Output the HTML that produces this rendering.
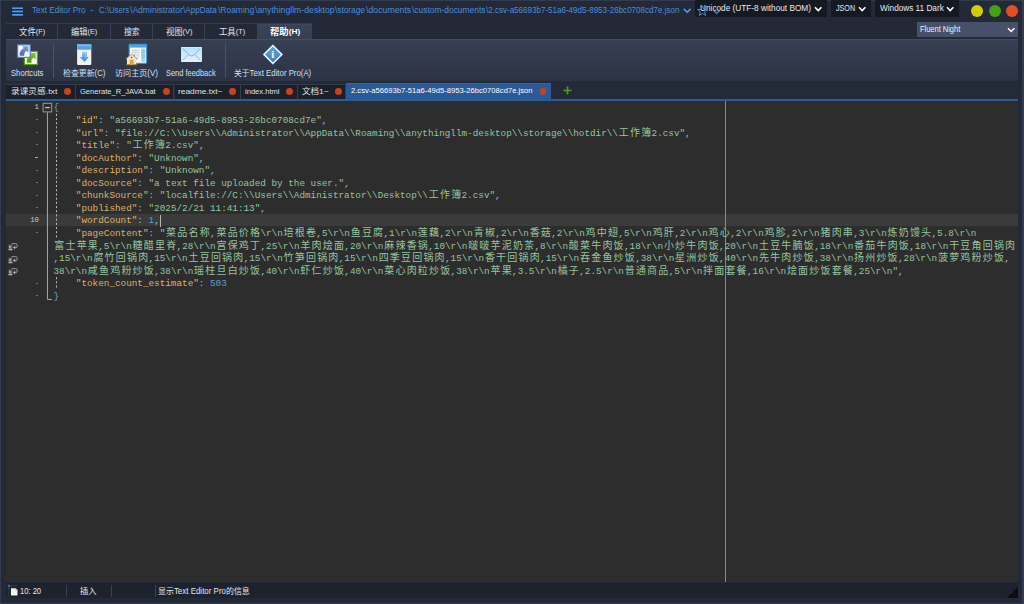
<!DOCTYPE html>
<html lang="zh">
<head>
<meta charset="utf-8">
<title>Text Editor Pro</title>
<style>
*{box-sizing:border-box;margin:0;padding:0}
html,body{width:1024px;height:604px;overflow:hidden}
body{background:#242938;font-family:"Liberation Sans","Noto Sans CJK SC",sans-serif;position:relative;color:#e4e6ea}
.abs{position:absolute}
#frame{position:absolute;left:0;top:0;width:1024px;height:604px;border:1px solid #343b4f;border-right-width:2px;pointer-events:none;z-index:50}
/* title */
.ti{position:absolute;top:3.1px;height:14px;line-height:14px;font-size:8.3px;color:#4b8ddf;white-space:pre;transform-origin:0 50%}
.dd{position:absolute;z-index:60;top:0;height:16.5px;background:#151922;color:#e8eaee;font-size:8.3px;line-height:16px;white-space:pre}
.dd span{position:absolute;top:0}
.circ{position:absolute;width:12px;height:12px;border-radius:50%;top:5px}
/* ribbon tabs */
#rtabs{position:absolute;left:5.7px;top:23.2px;width:306.2px;height:16px;border-top:1px solid #343a4c}
.rt{position:absolute;top:0;height:15px;border-right:1px solid #3a4154}
.rl{position:absolute;top:24.5px;height:15px;font-size:8.6px;line-height:15px;color:#e2e4e8;white-space:pre}
.rt.act{background:linear-gradient(#3a4257,#373f53);border:none;border-top:1px solid #3f475c;top:-0.2px;height:16.2px}
#tool{position:absolute;left:5.7px;top:38.7px;width:1012.5px;height:42.1px;background:linear-gradient(#373f53,#2c3345);border-top:1px solid #444c61}
.tl{position:absolute;top:66.5px;height:12px;line-height:12px;font-size:8.3px;color:#cfe0f7;white-space:pre}
.sep{position:absolute;top:42.5px;width:1px;height:35.5px;background:#4a5267}
/* doc tabs */
#dtbar{position:absolute;left:5.7px;top:80.8px;width:1012.5px;height:18.4px;background:#252a39}
.dt{position:absolute;top:83.8px;height:15.4px;background:#1b202b;border-top:1px solid #343b4d;border-right:1px solid #353c4e;font-size:8.1px;line-height:13.8px;color:#dfe2e8;white-space:pre}
.dt span{position:absolute;top:0}
.dt i{position:absolute;top:3.3px;width:6.8px;height:6.8px;border-radius:50%;background:#c8431a}
.dt.act{background:#2b5a99;top:83.3px;height:16px;border-top:1px solid #34649f;border-right:none;line-height:14.8px;color:#fff}
.dt.act i{top:3.8px}
#bline{position:absolute;left:5.7px;top:99.2px;width:1012.5px;height:1.8px;background:#2d5b98}
/* editor */
#ed{position:absolute;left:5.7px;top:100.9px;width:1012.5px;height:481.5px;background:#2d2d2d;overflow:hidden}
#gut{display:none}
#cur{position:absolute;left:5.7px;top:213.8px;width:1012.5px;height:12.6px;background:linear-gradient(90deg,#383838 41.5px,#3b3b3b 41.5px)}
#caret{position:absolute;left:160px;top:214.6px;width:1.1px;height:12.1px;background:#b6b6b6}
#margin{position:absolute;left:725px;top:101px;width:1px;height:481.5px;background:#8a8a8a}
.ln{position:absolute;left:53.5px;height:12.555px;line-height:12.555px;font-family:"Liberation Mono","Noto Sans CJK SC",monospace;font-size:9.327px;white-space:pre;letter-spacing:0}
.cj{font-family:"Noto Sans CJK SC","Liberation Mono",monospace;font-size:10.00px;line-height:1px;letter-spacing:1.19px;position:relative;left:0.8px}
.gn{position:absolute;left:10px;width:28.9px;text-align:right;height:12.555px;line-height:12.555px;font-family:"Liberation Mono",monospace;font-size:7.4px;letter-spacing:-0.15px;color:#c4cad2}
.gm{position:absolute;height:1px;background:#7a7a7a}
/* status */
#status{position:absolute;left:5.7px;top:582.3px;width:1012.5px;height:15.8px;background:#1d222d;border-top:1.5px solid #232937}
.st{position:absolute;top:585.2px;height:12px;line-height:12px;font-size:8.3px;color:#e4e6ea;white-space:pre}
.ssep{position:absolute;top:585px;width:1px;height:12px;background:#3a4153}
</style>
</head>
<body>
<!-- title bar -->
<svg class="abs" style="left:12px;top:6.5px" width="12" height="10" viewBox="0 0 12 10"><g fill="#4f9cf6"><rect x="0.2" y="0.4" width="10.8" height="1.6"/><rect x="0.2" y="3.6" width="10.8" height="1.7"/><rect x="0.2" y="7" width="10.8" height="1.7"/></g></svg>
<div class="ti" style="left:31.5px;transform-origin:0 50%;transform:scaleX(0.9849)">Text Editor Pro</div>
<div class="ti" style="left:89.6px;transform-origin:0 50%;transform:scaleX(1.1932)">-</div>
<div class="ti" style="left:98.7px;transform-origin:0 50%;transform:scaleX(0.9355)">C:\Users</div>
<div class="ti" style="left:129.7px;transform-origin:0 50%;transform:scaleX(1.0315)">\Administrator</div>
<div class="ti" style="left:183.1px;transform-origin:0 50%;transform:scaleX(0.9742)">\AppData</div>
<div class="ti" style="left:217.5px;transform-origin:0 50%;transform:scaleX(1.0193)">\Roaming</div>
<div class="ti" style="left:254.5px;transform-origin:0 50%;transform:scaleX(1.0472)">\anythingllm-desktop</div>
<div class="ti" style="left:334.8px;transform-origin:0 50%;transform:scaleX(0.9972)">\storage</div>
<div class="ti" style="left:365.5px;transform-origin:0 50%;transform:scaleX(1.0538)">\documents</div>
<div class="ti" style="left:411.5px;transform-origin:0 50%;transform:scaleX(1.0151)">\custom-documents</div>
<div class="ti" style="left:485.8px;transform-origin:0 50%;transform:scaleX(0.9682)">\2.csv-a56693b7-51a6-49d5-8953-26bc0708cd7e.json</div>
<svg class="abs" style="left:682.5px;top:8px" width="9" height="6" viewBox="0 0 9 6"><path d="M0.8 0.9 L4.2 4.2 L7.6 0.9" fill="none" stroke="#4f9cf6" stroke-width="1.5"/></svg>

<div class="dd" style="left:694.7px;width:132px"><span style="left:5.7px;transform-origin:0 50%;transform:scaleX(0.9948)">Unicode (UTF-8 without BOM)</span></div>
<div class="dd" style="left:830.9px;width:40px"><span style="left:5.0px;transform-origin:0 50%;transform:scaleX(0.8627)">JSON</span></div>
<div class="dd" style="left:874.9px;width:84px"><span style="left:4.85px;transform-origin:0 50%;transform:scaleX(0.9898)">Windows 11 Dark</span></div>
<svg class="abs" style="left:697px;top:5px;z-index:62" width="12" height="12" viewBox="0 0 12 12"><path d="M5.5 0.8 L6.9 4.3 L10.5 4.5 L7.7 6.9 L8.7 10.5 L5.5 8.5 L2.3 10.5 L3.3 6.9 L0.5 4.5 L4.1 4.3 Z" fill="none" stroke="#4b8ddf" stroke-width="1"/></svg>
<svg class="abs" style="left:713px;top:9.5px;z-index:62" width="8" height="5" viewBox="0 0 8 5"><path d="M0.8 0.8 L3.6 3.4 L6.4 0.8" fill="none" stroke="#4b8ddf" stroke-width="1.2"/></svg>
<svg class="abs chev" style="z-index:62;left:814px;top:5.5px" width="9" height="7" viewBox="0 0 9 7"><path d="M1 1.2 L4.2 4.5 L7.4 1.2" fill="none" stroke="#fff" stroke-width="1.6"/></svg>
<svg class="abs chev" style="z-index:62;left:858px;top:5.5px" width="9" height="7" viewBox="0 0 9 7"><path d="M1 1.2 L4.2 4.5 L7.4 1.2" fill="none" stroke="#fff" stroke-width="1.6"/></svg>
<svg class="abs chev" style="z-index:62;left:946px;top:5.5px" width="9" height="7" viewBox="0 0 9 7"><path d="M1 1.2 L4.2 4.5 L7.4 1.2" fill="none" stroke="#fff" stroke-width="1.6"/></svg>
<div class="circ" style="left:971.4px;background:#d3cd00"></div>
<div class="circ" style="left:989px;background:#43a118"></div>
<div class="circ" style="left:1006.4px;background:#e14f22"></div>

<!-- ribbon tabs -->
<div id="rtabs">
<div class="rt" style="left:0;width:52.3px"></div>
<div class="rt" style="left:52.3px;width:52.7px"></div>
<div class="rt" style="left:105px;width:42.8px"></div>
<div class="rt" style="left:147.8px;width:52px"></div>
<div class="rt" style="left:199.8px;width:53px"></div>
<div class="rt act" style="left:252.8px;width:53.4px"></div>
</div>
<div class="rl" style="left:18.6px;transform-origin:0 50%;transform:scaleX(0.9775)">文件<span style="font-size:7.6px;position:relative;top:-0.5px">(F)</span></div>
<div class="rl" style="left:70.8px;transform-origin:0 50%;transform:scaleX(0.9624)">编辑<span style="font-size:7.6px;position:relative;top:-0.5px">(E)</span></div>
<div class="rl" style="left:124.25px;transform-origin:0 50%;transform:scaleX(0.9155)">搜索</div>
<div class="rl" style="left:166.1px;transform-origin:0 50%;transform:scaleX(0.9660)">视图<span style="font-size:7.6px;position:relative;top:-0.5px">(V)</span></div>
<div class="rl" style="left:218.8px;transform-origin:0 50%;transform:scaleX(0.9738)">工具<span style="font-size:7.6px;position:relative;top:-0.5px">(T)</span></div>
<div class="rl" style="font-weight:bold;color:#fff;left:269.9px;transform-origin:0 50%;transform:scaleX(1.0883)">帮助<span style="font-size:7.6px;position:relative;top:-0.5px">(H)</span></div>
<div class="abs" style="left:917px;top:21.6px;width:101.2px;height:15.4px;background:#465069"></div>
<div class="abs" style="top:21.6px;height:15.4px;font-size:8.3px;line-height:15px;color:#f0f2f5;white-space:pre;left:919.75px;transform-origin:0 50%;transform:scaleX(0.8998)">Fluent Night</div>
<svg class="abs" style="left:1007px;top:26.5px" width="9" height="7" viewBox="0 0 9 7"><path d="M1 1.2 L4.2 4.5 L7.4 1.2" fill="none" stroke="#fff" stroke-width="1.5"/></svg>

<!-- toolbar -->
<div id="tool"></div>
<div class="sep" style="left:53px"></div>
<div class="sep" style="left:225.2px"></div>
<div class="tl" style="left:10.7px;transform-origin:0 50%;transform:scaleX(0.9241)">Shortcuts</div>
<div class="tl" style="left:62.5px;transform-origin:0 50%;transform:scaleX(0.9504)">检查更新(C)</div>
<div class="tl" style="left:115px;transform-origin:0 50%;transform:scaleX(0.9718)">访问主页(V)</div>
<div class="tl" style="left:166.1px;transform-origin:0 50%;transform:scaleX(0.8960)">Send feedback</div>
<div class="tl" style="left:234px;transform-origin:0 50%;transform:scaleX(0.9406)">关于Text Editor Pro(A)</div>


<!-- icons -->
<svg class="abs" style="left:16px;top:43px" width="24" height="24" viewBox="0 0 24 24">
<defs><linearGradient id="gb" x1="0" y1="0" x2="0" y2="1"><stop offset="0" stop-color="#7f9be0"/><stop offset="1" stop-color="#4662b8"/></linearGradient>
<linearGradient id="gg" x1="0" y1="0" x2="0" y2="1"><stop offset="0" stop-color="#8cc820"/><stop offset="1" stop-color="#4f9a00"/></linearGradient></defs>
<rect x="8.4" y="8.5" width="13" height="13" fill="#fff" stroke="#5aa408" stroke-width="1.3"/>
<path d="M13.2 10 H19.6 V16.4 L17.6 14.6 C16 15.6 15.2 17.4 15.6 19.8 H10.8 C10.2 16.2 11.8 13.4 14.9 11.9 Z" fill="url(#gg)"/>
<rect x="1.6" y="1.8" width="12.6" height="12.6" fill="#fff" stroke="#5b78c6" stroke-width="1.3"/>
<path d="M6 3.2 H12.4 V9.6 L10.4 7.8 C8.8 8.8 8 10.6 8.4 12.8 H3.7 C3.1 9.2 4.7 6.6 7.7 5 Z" fill="url(#gb)"/>
</svg>
<svg class="abs" style="left:76px;top:43px" width="17" height="23" viewBox="0 0 17 23">
<defs><linearGradient id="gd" x1="0" y1="0" x2="0" y2="1"><stop offset="0" stop-color="#74b6ec"/><stop offset="1" stop-color="#3f8fd8"/></linearGradient></defs>
<rect x="1.1" y="1.1" width="14.2" height="20.8" rx="0.8" fill="#f1f1f1"/>
<rect x="1.1" y="1.1" width="14.2" height="5.6" rx="0.8" fill="#5aa3e2"/>
<rect x="1.6" y="1.6" width="13.2" height="1.6" fill="#7cb8ea"/>
<path d="M6.2 9.2 H10.9 V13.9 H12.9 L8.5 18.9 L3.7 13.9 H6.2 Z" fill="url(#gd)"/>
<path d="M7.6 10.4 H9.6 V14.6" fill="none" stroke="#b8dcf8" stroke-width="0.8"/>
</svg>
<svg class="abs" style="left:125px;top:43px" width="24" height="23" viewBox="0 0 24 23">
<rect x="4.2" y="1.4" width="17.4" height="18.8" rx="0.8" fill="#fff" stroke="#3d97d6" stroke-width="1.1"/>
<rect x="4.8" y="2" width="16.2" height="2.6" fill="#4aa2e0"/>
<rect x="16.2" y="5.4" width="4.2" height="13.6" fill="#a8d2f0"/>
<rect x="6.2" y="5.6" width="9" height="13" fill="#f1f0ee"/>
<g stroke="#c8ccd8" stroke-width="0.9"><path d="M7 7.6 H14 M7 9.8 H14 M11.6 12 H14 M11.6 14.2 H14"/></g>
<g stroke="#84b8e2" stroke-width="0.9"><path d="M16.4 7.6 H20.2 M16.4 9.8 H20.2 M16.4 12 H20.2 M16.4 14.2 H20.2"/></g>
<path d="M1 15.6 L6.6 10.8 L12.2 15.6 V16.6 H1 Z" fill="#c89038"/>
<path d="M2 15.4 L6.6 11.6 L11.2 15.4 V21.6 H2 Z" fill="#f1e6c8"/>
<path d="M1 21.4 H12.2 V22.2 H1 Z" fill="#b88a3a"/>
<rect x="4.6" y="16.6" width="4" height="5" fill="#dca838"/>
<rect x="8.6" y="11.6" width="1.4" height="2" fill="#8a8a96"/>
<circle cx="6.6" cy="14.5" r="0.8" fill="#2a52c0"/>
</svg>
<svg class="abs" style="left:179.5px;top:46px" width="23" height="17" viewBox="0 0 23 17">
<defs><linearGradient id="ge" x1="0" y1="0" x2="0" y2="1"><stop offset="0" stop-color="#b8e0fb"/><stop offset="1" stop-color="#e2f3fe"/></linearGradient></defs>
<rect x="1.2" y="1" width="20.6" height="14.9" rx="0.6" fill="url(#ge)"/>
<rect x="1.7" y="1.5" width="19.6" height="13.9" fill="none" stroke="#d8effd" stroke-width="0.8"/>
<path d="M2.6 2.4 L9.6 9.2 Q11.5 10.6 13.4 9.2 L20.4 2.4" fill="none" stroke="#86abc8" stroke-width="0.9"/>
<path d="M2.6 14.4 L8.4 8.2 M20.4 14.4 L14.6 8.2" fill="none" stroke="#86abc8" stroke-width="0.9"/>
</svg>
<svg class="abs" style="left:261px;top:43px" width="24" height="24" viewBox="0 0 24 24">
<defs><linearGradient id="gi" x1="0" y1="0" x2="0" y2="1"><stop offset="0" stop-color="#6a9fd2"/><stop offset="1" stop-color="#3f7fba"/></linearGradient></defs>
<path d="M11.9 1.1 L22.3 11.5 L11.9 21.9 L1.5 11.5 Z" fill="#4a88c4"/>
<path d="M11.9 2.6 L20.8 11.5 L11.9 20.4 L3 11.5 Z" fill="url(#gi)" stroke="#fff" stroke-width="1.3"/>
<text x="11.9" y="15.3" font-family="Liberation Serif, serif" font-weight="bold" font-size="11" fill="#fff" text-anchor="middle">i</text>
</svg>

<!-- doc tabs -->
<div id="dtbar"></div>
<div class="dt" style="left:5.7px;width:70px"><span style="left:5.2px;transform-origin:0 50%;transform:scaleX(1.0725)">录课灵感.txt</span><i style="left:58.8px"></i></div>
<div class="dt" style="left:75.7px;width:98.8px"><span style="left:4.6px;transform-origin:0 50%;transform:scaleX(0.9329)">Generate_R_JAVA.bat</span><i style="left:87.5px"></i></div>
<div class="dt" style="left:174.5px;width:66px"><span style="left:3.9px;transform-origin:0 50%;transform:scaleX(1.0356)">readme.txt~</span><i style="left:54.4px"></i></div>
<div class="dt" style="left:240.5px;width:57.2px"><span style="left:4.2px;transform-origin:0 50%;transform:scaleX(0.9352)">index.html</span><i style="left:45.6px"></i></div>
<div class="dt" style="left:297.7px;width:48.7px"><span style="left:4.6px;transform-origin:0 50%;transform:scaleX(1.0503)">文档1~</span><i style="left:37.4px"></i></div>
<div class="dt act" style="left:346.4px;width:204.2px"><span style="left:4.6px;transform-origin:0 50%;transform:scaleX(0.9423)">2.csv-a56693b7-51a6-49d5-8953-26bc0708cd7e.json</span><i style="left:193.2px"></i></div>
<svg class="abs" style="left:562.5px;top:86px" width="9" height="9" viewBox="0 0 9 9"><path d="M4.5 0.4 V8.6 M0.4 4.5 H8.6" stroke="#4e9a1e" stroke-width="1.7" fill="none"/></svg>
<div id="bline"></div>

<!-- editor -->
<div id="ed"></div>
<div id="gut"></div>
<div id="cur"></div>
<div id="margin"></div>
<div id="caret"></div>
<div class="gn" style="top:101.00px">1</div>
<div class="gm" style="top:119.36px;left:36.1px;width:1.8px;background:#767676"></div>
<div class="gm" style="top:131.91px;left:36.1px;width:1.8px;background:#767676"></div>
<div class="gm" style="top:144.47px;left:36.1px;width:1.8px;background:#767676"></div>
<div class="gm" style="top:157.02px;left:35.2px;width:3px;background:#aaaaaa"></div>
<div class="gm" style="top:169.58px;left:36.1px;width:1.8px;background:#767676"></div>
<div class="gm" style="top:182.13px;left:36.1px;width:1.8px;background:#767676"></div>
<div class="gm" style="top:194.69px;left:36.1px;width:1.8px;background:#767676"></div>
<div class="gm" style="top:207.24px;left:36.1px;width:1.8px;background:#767676"></div>
<div class="gn" style="top:214.00px">10</div>
<div class="gm" style="top:232.35px;left:36.1px;width:1.8px;background:#767676"></div>
<div class="gm" style="top:282.57px;left:36.1px;width:1.8px;background:#767676"></div>
<div class="gm" style="top:295.12px;left:36.1px;width:1.8px;background:#767676"></div>
<svg class="abs" style="left:7.5px;top:243.00px" width="11" height="8" viewBox="0 0 11 8"><rect x="0.6" y="1.6" width="3.6" height="5.6" fill="#6e6e6e"/><rect x="0.6" y="6" width="3.8" height="1.2" fill="#b4b4b4"/><rect x="1.2" y="3" width="1.6" height="1.8" fill="#b0b0b0"/><path d="M3.6 0.7 H7.6 Q9.3 0.7 9.3 2.4 V2.9 Q9.3 4.6 7.6 4.6 H7" fill="none" stroke="#a8a8a8" stroke-width="0.9"/><path d="M4.9 4.6 L7.2 2.6 V6.6 Z" fill="#b4b4b4"/></svg>
<svg class="abs" style="left:7.5px;top:255.56px" width="11" height="8" viewBox="0 0 11 8"><rect x="0.6" y="1.6" width="3.6" height="5.6" fill="#6e6e6e"/><rect x="0.6" y="6" width="3.8" height="1.2" fill="#b4b4b4"/><rect x="1.2" y="3" width="1.6" height="1.8" fill="#b0b0b0"/><path d="M3.6 0.7 H7.6 Q9.3 0.7 9.3 2.4 V2.9 Q9.3 4.6 7.6 4.6 H7" fill="none" stroke="#a8a8a8" stroke-width="0.9"/><path d="M4.9 4.6 L7.2 2.6 V6.6 Z" fill="#b4b4b4"/></svg>
<svg class="abs" style="left:7.5px;top:268.12px" width="11" height="8" viewBox="0 0 11 8"><rect x="0.6" y="1.6" width="3.6" height="5.6" fill="#6e6e6e"/><rect x="0.6" y="6" width="3.8" height="1.2" fill="#b4b4b4"/><rect x="1.2" y="3" width="1.6" height="1.8" fill="#b0b0b0"/><path d="M3.6 0.7 H7.6 Q9.3 0.7 9.3 2.4 V2.9 Q9.3 4.6 7.6 4.6 H7" fill="none" stroke="#a8a8a8" stroke-width="0.9"/><path d="M4.9 4.6 L7.2 2.6 V6.6 Z" fill="#b4b4b4"/></svg>
<svg class="abs" style="left:40px;top:100.90px" width="20" height="205" viewBox="0 0 20 205"><rect x="3.1" y="2.3" width="8.6" height="8.6" fill="none" stroke="#9c9c9c" stroke-width="1"/><path d="M5.1 6.6 H9.8" stroke="#d4d4d4" stroke-width="1.1"/><path d="M7.45 11.4 V198.43 H12" fill="none" stroke="#a6a6a6" stroke-width="1"/><path d="M16.5 12.8 V136.91" stroke="#b8b8b8" stroke-width="1" stroke-dasharray="2.1 2.09"/><path d="M16.5 176.07 V187.32" stroke="#b8b8b8" stroke-width="1" stroke-dasharray="2.1 2.09"/></svg>
<div class="ln" style="top:102.40px"><span style="color:#62a8dc">{</span></div>
<div class="ln" style="top:114.96px">    <span style="color:#dcb268">"id"</span><span style="color:#78c2ec">: </span><span style="color:#96c4a0">"a56693b7-51a6-49d5-8953-26bc0708cd7e"</span><span style="color:#78c2ec">,</span></div>
<div class="ln" style="top:127.51px">    <span style="color:#dcb268">"url"</span><span style="color:#78c2ec">: </span><span style="color:#96c4a0">"file://C:\\Users\\Administrator\\AppData\\Roaming\\anythingllm-desktop\\storage\\hotdir\\<span class="cj">工作簿</span>2.csv"</span><span style="color:#78c2ec">,</span></div>
<div class="ln" style="top:140.06px">    <span style="color:#dcb268">"title"</span><span style="color:#78c2ec">: </span><span style="color:#96c4a0">"<span class="cj">工作簿</span>2.csv"</span><span style="color:#78c2ec">,</span></div>
<div class="ln" style="top:152.62px">    <span style="color:#dcb268">"docAuthor"</span><span style="color:#78c2ec">: </span><span style="color:#96c4a0">"Unknown"</span><span style="color:#78c2ec">,</span></div>
<div class="ln" style="top:165.18px">    <span style="color:#dcb268">"description"</span><span style="color:#78c2ec">: </span><span style="color:#96c4a0">"Unknown"</span><span style="color:#78c2ec">,</span></div>
<div class="ln" style="top:177.73px">    <span style="color:#dcb268">"docSource"</span><span style="color:#78c2ec">: </span><span style="color:#96c4a0">"a text file uploaded by the user."</span><span style="color:#78c2ec">,</span></div>
<div class="ln" style="top:190.28px">    <span style="color:#dcb268">"chunkSource"</span><span style="color:#78c2ec">: </span><span style="color:#96c4a0">"localfile://C:\\Users\\Administrator\\Desktop\\<span class="cj">工作簿</span>2.csv"</span><span style="color:#78c2ec">,</span></div>
<div class="ln" style="top:202.84px">    <span style="color:#dcb268">"published"</span><span style="color:#78c2ec">: </span><span style="color:#96c4a0">"2025/2/21 11:41:13"</span><span style="color:#78c2ec">,</span></div>
<div class="ln" style="top:215.40px">    <span style="color:#dcb268">"wordCount"</span><span style="color:#78c2ec">: </span><span style="color:#5a9ed6">1</span><span style="color:#78c2ec">,</span></div>
<div class="ln" style="top:227.95px">    <span style="color:#dcb268">"pageContent"</span><span style="color:#78c2ec">: </span><span style="color:#96c4a0">"<span class="cj">菜品名称</span>,<span class="cj">菜品价格</span>\r\n<span class="cj">培根卷</span>,5\r\n<span class="cj">鱼豆腐</span>,1\r\n<span class="cj">莲藕</span>,2\r\n<span class="cj">青椒</span>,2\r\n<span class="cj">香菇</span>,2\r\n<span class="cj">鸡中翅</span>,5\r\n<span class="cj">鸡肝</span>,2\r\n<span class="cj">鸡心</span>,2\r\n<span class="cj">鸡胗</span>,2\r\n<span class="cj">猪肉串</span>,3\r\n<span class="cj">炼奶馒头</span>,5.8\r\n</span></div>
<div class="ln" style="top:240.50px"><span style="color:#96c4a0"><span class="cj">富士苹果</span>,5\r\n<span class="cj">糖醋里脊</span>,28\r\n<span class="cj">宫保鸡丁</span>,25\r\n<span class="cj">羊肉烩面</span>,20\r\n<span class="cj">麻辣香锅</span>,10\r\n<span class="cj">啵啵芋泥奶茶</span>,8\r\n<span class="cj">酸菜牛肉饭</span>,18\r\n<span class="cj">小炒牛肉饭</span>,20\r\n<span class="cj">土豆牛腩饭</span>,18\r\n<span class="cj">番茄牛肉饭</span>,18\r\n<span class="cj">干豆角回锅肉</span></span></div>
<div class="ln" style="top:253.06px"><span style="color:#96c4a0">,15\r\n<span class="cj">腐竹回锅肉</span>,15\r\n<span class="cj">土豆回锅肉</span>,15\r\n<span class="cj">竹笋回锅肉</span>,15\r\n<span class="cj">四季豆回锅肉</span>,15\r\n<span class="cj">香干回锅肉</span>,15\r\n<span class="cj">吞金鱼炒饭</span>,38\r\n<span class="cj">星洲炒饭</span>,40\r\n<span class="cj">先牛肉炒饭</span>,38\r\n<span class="cj">扬州炒饭</span>,28\r\n<span class="cj">菠萝鸡粉炒饭</span>,</span></div>
<div class="ln" style="top:265.62px"><span style="color:#96c4a0">38\r\n<span class="cj">咸鱼鸡粉炒饭</span>,38\r\n<span class="cj">瑶柱旦白炒饭</span>,40\r\n<span class="cj">虾仁炒饭</span>,40\r\n<span class="cj">菜心肉粒炒饭</span>,38\r\n<span class="cj">苹果</span>,3.5\r\n<span class="cj">橘子</span>,2.5\r\n<span class="cj">普通商品</span>,5\r\n<span class="cj">拌面套餐</span>,16\r\n<span class="cj">烩面炒饭套餐</span>,25\r\n"</span><span style="color:#78c2ec">,</span></div>
<div class="ln" style="top:278.17px">    <span style="color:#dcb268">"token_count_estimate"</span><span style="color:#78c2ec">: </span><span style="color:#5a9ed6">503</span></div>
<div class="ln" style="top:290.73px"><span style="color:#62a8dc">}</span></div>

<!-- status -->
<div id="status"></div>
<div class="st" style="left:20.1px;transform-origin:0 50%;transform:scaleX(0.9143)">10: 20</div>
<div class="st" style="left:80px;transform-origin:0 50%;transform:scaleX(0.9934)">插入</div>
<div class="st" style="left:158.2px;transform-origin:0 50%;transform:scaleX(0.9572)">显示Text Editor Pro的信息</div>
<div class="ssep" style="left:65.6px"></div>
<div class="ssep" style="left:111px"></div>
<div class="ssep" style="left:155px"></div>
<svg class="abs" style="left:6.5px;top:584.1px" width="12" height="13" viewBox="0 0 12 13"><path d="M4 4.2 H8.6 L10.5 6.1 V11.5 H4 Z" fill="#f2f2f2"/><path d="M8.4 4.4 V6.3 H10.3" fill="none" stroke="#b8b8b8" stroke-width="0.6"/><path d="M0.6 2 H3.4 M2 0.6 V3.4" stroke="#3f80c4" stroke-width="1"/><path d="M4 2 H10.5" stroke="#3a6ea6" stroke-width="0.8" stroke-dasharray="1.2 1"/><path d="M2 4 V11.5" stroke="#3a6ea6" stroke-width="0.8" stroke-dasharray="1.2 1"/></svg>
<svg class="abs" style="left:1006px;top:586.6px" width="12.2" height="11.6" viewBox="0 0 12.2 11.6"><path d="M12.2 0 V11.6 H0 Z" fill="#0b0d11"/></svg>
<div id="frame"></div>
</body>
</html>
